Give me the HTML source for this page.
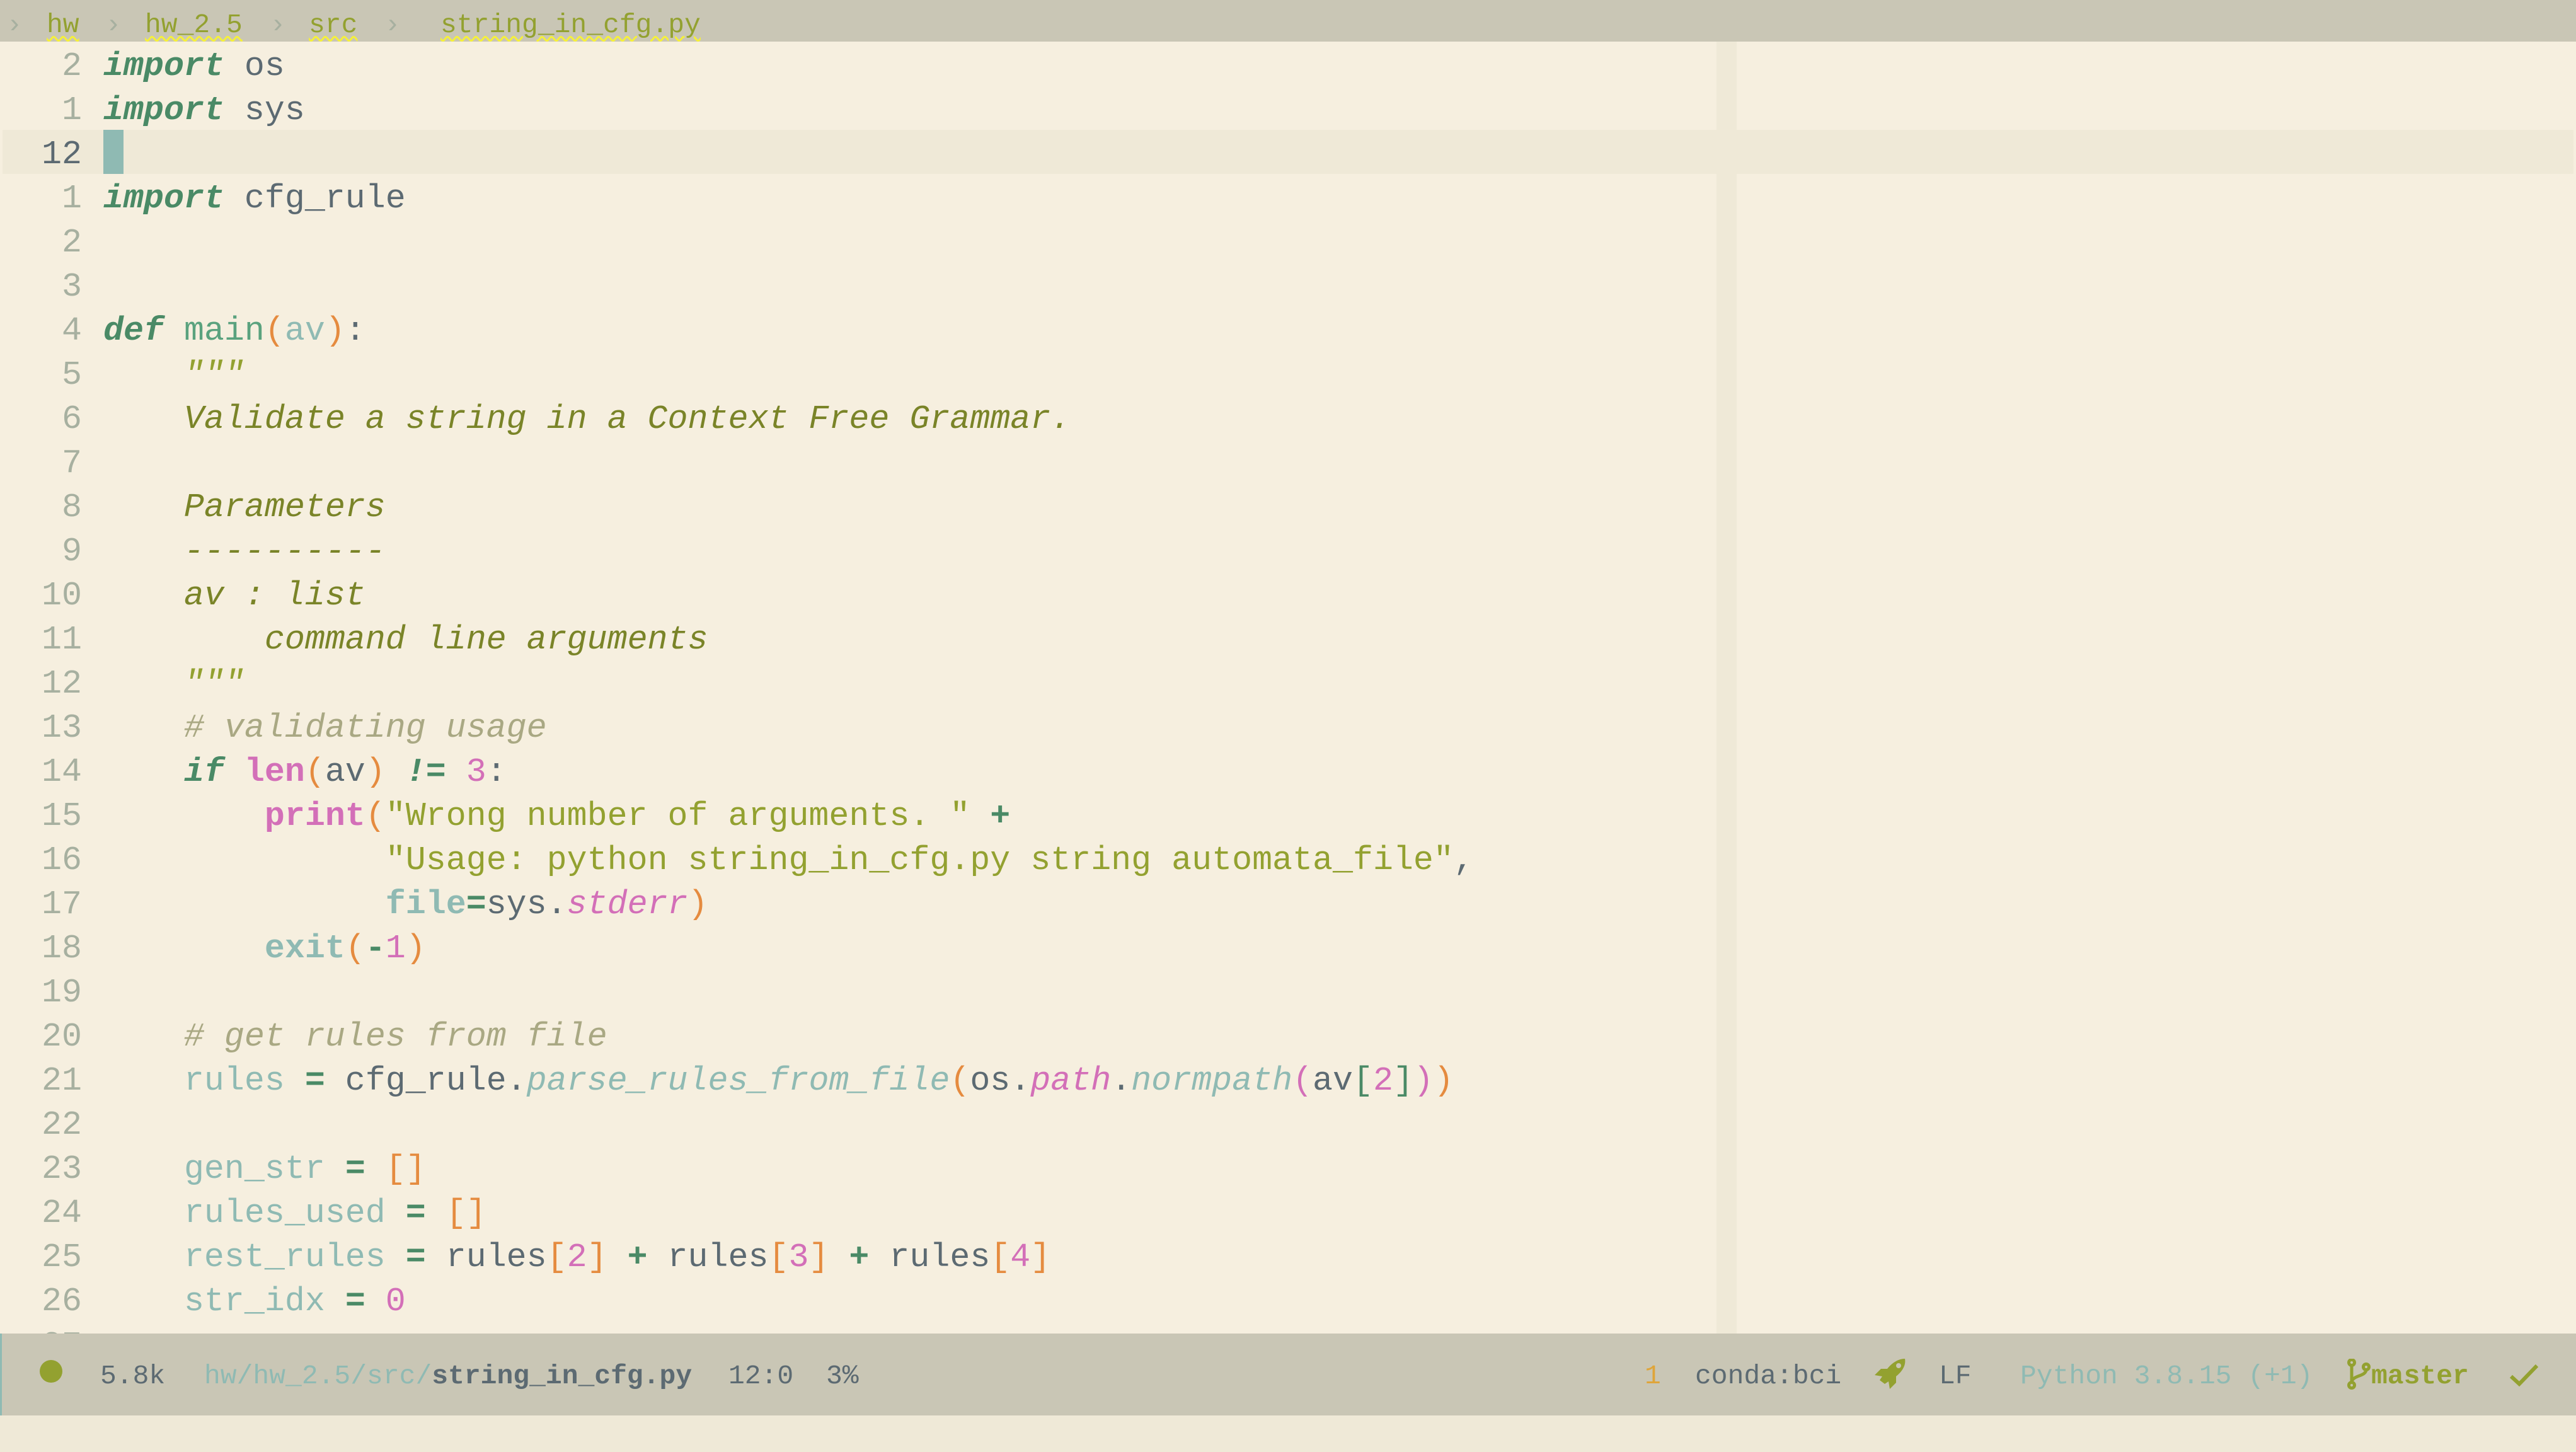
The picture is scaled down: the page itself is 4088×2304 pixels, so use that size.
<!DOCTYPE html>
<html><head><meta charset="utf-8">
<style>
*{margin:0;padding:0;box-sizing:border-box}
html,body{width:4088px;height:2304px;overflow:hidden;background:#f6efdf;font-family:"Liberation Mono",monospace}
#hdr{position:absolute;left:0;top:0;width:4088px;height:66px;background:#c9c6b5;font-size:43px;line-height:66px;color:#93a130}
#hdr span{position:absolute;top:7px;white-space:pre}
#hdr .s{color:#a7b0a0}
#hdr .u{text-decoration:underline wavy #f5f03a;text-decoration-thickness:3px;text-underline-offset:6px}
#stripe{position:absolute;left:2724px;top:66px;width:32px;height:2050px;background:#efe9d7}
#cur{position:absolute;left:4px;top:206px;width:4080px;height:70px;background:#efe9d7}
#caret{position:absolute;left:164px;top:206px;width:32px;height:70px;background:#8fbab3}
#code{position:absolute;left:0;top:66px;width:4088px;height:2050px;overflow:hidden;font-size:53.3px;line-height:70px;color:#5c6a72}
.r{height:70px;position:relative;overflow:visible}
.n{position:absolute;right:3958px;top:5px;color:#a7b0a0;white-space:pre}
.n.c{color:#5c6a72}
.t{position:absolute;left:164px;top:5px;white-space:pre}
.k{color:#4a8a66;font-style:italic;font-weight:bold}
.op{color:#4a8a66;font-weight:bold}
.f{color:#5aa27e}
.v{color:#8fbab3}
.q{color:#93a130;font-style:italic}
.d{color:#7a8428;font-style:italic}
.cm{color:#a9a883;font-style:italic}
.p{color:#d36fb8}
.pb{color:#d36fb8;font-weight:bold}
.tb{color:#8fbab3;font-weight:bold}
.ti{color:#8fbab3;font-style:italic}
.pi{color:#d36fb8;font-style:italic}
.o{color:#e58b3f}
.g{color:#4a8a66}
.s{color:#93a130}
#st{position:absolute;left:0;top:2116px;width:4088px;height:130px;background:#c9c6b5;border-left:3px solid #8fbab3;font-size:43px;line-height:130px;color:#5c6a72}
#st > span{position:absolute;top:3px;white-space:pre}
#st .ic{display:block;line-height:0}
#bot{position:absolute;left:0;top:2246px;width:4088px;height:58px;background:#efe9d7}
</style></head><body>
<div id="hdr">
<span class="s" style="left:10px">›</span>
<span class="u" style="left:74px">hw</span>
<span class="s" style="left:167px">›</span>
<span class="u" style="left:230px">hw_2.5</span>
<span class="s" style="left:428px">›</span>
<span class="u" style="left:490px">src</span>
<span class="s" style="left:610px">›</span>
<span class="u" style="left:699px">string_in_cfg.py</span>
</div>
<div id="stripe"></div>
<div id="cur"></div>
<div id="caret"></div>
<div id="code"><div class="r"><span class="n">2</span><span class="t"><span class="k">import</span> os</span></div><div class="r"><span class="n">1</span><span class="t"><span class="k">import</span> sys</span></div><div class="r"><span class="n c">12</span></div><div class="r"><span class="n">1</span><span class="t"><span class="k">import</span> cfg_rule</span></div><div class="r"><span class="n">2</span></div><div class="r"><span class="n">3</span></div><div class="r"><span class="n">4</span><span class="t"><span class="k">def</span> <span class="f">main</span><span class="o">(</span><span class="v">av</span><span class="o">)</span>:</span></div><div class="r"><span class="n">5</span><span class="t">    <span class="q">"""</span></span></div><div class="r"><span class="n">6</span><span class="t"><span class="d">    Validate a string in a Context Free Grammar.</span></span></div><div class="r"><span class="n">7</span></div><div class="r"><span class="n">8</span><span class="t"><span class="d">    Parameters</span></span></div><div class="r"><span class="n">9</span><span class="t"><span class="d">    ----------</span></span></div><div class="r"><span class="n">10</span><span class="t"><span class="d">    av : list</span></span></div><div class="r"><span class="n">11</span><span class="t"><span class="d">        command line arguments</span></span></div><div class="r"><span class="n">12</span><span class="t">    <span class="q">"""</span></span></div><div class="r"><span class="n">13</span><span class="t"><span class="cm">    # validating usage</span></span></div><div class="r"><span class="n">14</span><span class="t">    <span class="k">if</span> <span class="pb">len</span><span class="o">(</span>av<span class="o">)</span> <span class="k">!=</span> <span class="p">3</span>:</span></div><div class="r"><span class="n">15</span><span class="t">        <span class="pb">print</span><span class="o">(</span><span class="s">"Wrong number of arguments. "</span> <span class="op">+</span></span></div><div class="r"><span class="n">16</span><span class="t">              <span class="s">"Usage: python string_in_cfg.py string automata_file"</span>,</span></div><div class="r"><span class="n">17</span><span class="t">              <span class="tb">file</span><span class="op">=</span>sys.<span class="pi">stderr</span><span class="o">)</span></span></div><div class="r"><span class="n">18</span><span class="t">        <span class="tb">exit</span><span class="o">(</span><span class="op">-</span><span class="p">1</span><span class="o">)</span></span></div><div class="r"><span class="n">19</span></div><div class="r"><span class="n">20</span><span class="t"><span class="cm">    # get rules from file</span></span></div><div class="r"><span class="n">21</span><span class="t">    <span class="v">rules</span> <span class="op">=</span> cfg_rule.<span class="ti">parse_rules_from_file</span><span class="o">(</span>os.<span class="pi">path</span>.<span class="ti">normpath</span><span class="p">(</span>av<span class="g">[</span><span class="p">2</span><span class="g">]</span><span class="p">)</span><span class="o">)</span></span></div><div class="r"><span class="n">22</span></div><div class="r"><span class="n">23</span><span class="t">    <span class="v">gen_str</span> <span class="op">=</span> <span class="o">[]</span></span></div><div class="r"><span class="n">24</span><span class="t">    <span class="v">rules_used</span> <span class="op">=</span> <span class="o">[]</span></span></div><div class="r"><span class="n">25</span><span class="t">    <span class="v">rest_rules</span> <span class="op">=</span> rules<span class="o">[</span><span class="p">2</span><span class="o">]</span> <span class="op">+</span> rules<span class="o">[</span><span class="p">3</span><span class="o">]</span> <span class="op">+</span> rules<span class="o">[</span><span class="p">4</span><span class="o">]</span></span></div><div class="r"><span class="n">26</span><span class="t">    <span class="v">str_idx</span> <span class="op">=</span> <span class="p">0</span></span></div><div class="r"><span class="n">27</span></div></div>
<div id="st">
<span style="left:60px;top:42px;width:36px;height:36px;border-radius:50%;background:#93a130"></span>
<span style="left:156px">5.8k</span>
<span style="left:321px"><span style="color:#8fbab3">hw/hw_2.5/src/</span><span style="font-weight:bold">string_in_cfg.py</span></span>
<span style="left:1153px">12:0</span>
<span style="left:1308px">3%</span>
<span style="left:2607px;color:#dfa53a">1</span>
<span style="left:2687px">conda:bci</span>
<span class="ic" style="left:2970px;top:38px;height:52px">
<svg width="54" height="52" viewBox="0 0 54 52"><path d="M50 2 C40 2 30 8 22 18 L12 18 L2 28 L14 30 L10 36 L18 42 L24 38 L26 50 L36 40 L36 30 C46 22 52 12 50 2 Z" fill="#93a130"/><circle cx="40" cy="13" r="4" fill="#c9c6b5"/></svg></span>
<span style="left:3074px">LF</span>
<span style="left:3203px;color:#8fbab3">Python 3.8.15 (+1)</span>
<span class="ic" style="left:3722px;top:40px;height:50px">
<svg width="38" height="50" viewBox="0 0 38 50"><g fill="none" stroke="#93a130" stroke-width="5"><circle cx="7" cy="6" r="4.5"/><circle cx="30" cy="13" r="4.5"/><circle cx="7" cy="42" r="4.5"/><path d="M7 10 V38 M30 17 C30 28 10 26 7 36"/></g></svg></span>
<span style="left:3760px;color:#93a130;font-weight:bold">master</span>
<span class="ic" style="left:3980px;top:48px;height:36px">
<svg width="46" height="36" viewBox="0 0 46 36"><path d="M2 20 L15 32 L43 3" fill="none" stroke="#93a130" stroke-width="6"/></svg></span>
</div>
<div id="bot"></div>
</body></html>
